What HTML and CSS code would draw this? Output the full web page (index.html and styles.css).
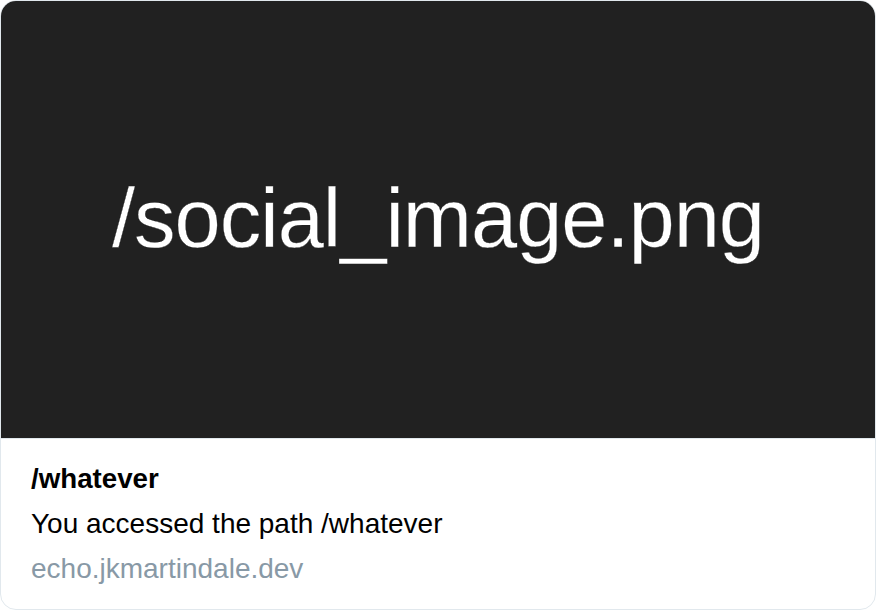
FILE: index.html
```html
<!DOCTYPE html>
<html>
<head>
<meta charset="utf-8">
<link rel="stylesheet" href="styles.css">
</head>
<body>
<div class="card">
  <div class="media">
    <span class="media-text">/social_image.png</span>
  </div>
  <div class="body">
    <div class="title">/whatever</div>
    <div class="desc">You accessed the path /whatever</div>
    <div class="domain">echo.jkmartindale.dev</div>
  </div>
</div>
</body>
</html>
```

FILE: styles.css
```css
html, body {
  margin: 0;
  padding: 0;
  background: #ffffff;
}
body {
  font-family: "Liberation Sans", Arial, sans-serif;
}
.card {
  box-sizing: border-box;
  width: 876px;
  height: 610px;
  border: 1px solid #e1e8ed;
  border-radius: 16px;
  overflow: hidden;
  display: flex;
  flex-direction: column;
}
.media {
  height: 437px;
  background: #212121;
  border-bottom: 1px solid #e1e8ed;
  display: flex;
  align-items: center;
  justify-content: center;
}
.media-text {
  color: #ffffff;
  font-size: 83px;
  letter-spacing: -1px;
  line-height: 1;
  margin-top: -2px;
  -webkit-text-stroke: 0.3px #212121;
}
.body {
  padding: 24px 30px 0;
  display: flex;
  flex-direction: column;
  gap: 13px;
}
.title {
  font-weight: bold;
  font-size: 27.7px;
  line-height: 32px;
  color: #000;
}
.desc {
  font-size: 28px;
  line-height: 32px;
  color: #000;
}
.domain {
  font-size: 28px;
  line-height: 32px;
  color: #8899a6;
}
```
